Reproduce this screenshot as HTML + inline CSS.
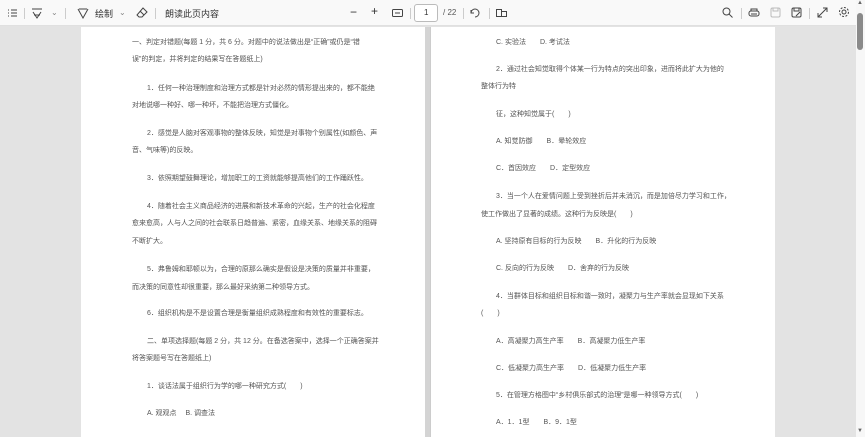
<!DOCTYPE html>
<html><head><meta charset="utf-8"><style>
*{margin:0;padding:0;box-sizing:border-box}
body{width:865px;height:437px;overflow:hidden;background:#e3e3e3;font-family:"Liberation Sans","Noto Sans CJK SC",sans-serif;position:relative}
.tb{position:absolute;left:0;top:0;width:856px;height:26px;background:#f9f9f9;border-bottom:1px solid #e0e0e0;font-size:9px;color:#333}
.tb span,.tb svg{position:absolute}
.sep{position:absolute;top:8px;width:1px;height:11px;background:#ccc}
.page{position:absolute;top:27px;height:410px;background:#fff}
.l{position:absolute;font-size:7px;color:#555;white-space:nowrap;line-height:9px}
.sb{position:absolute;left:856px;top:0;width:9px;height:437px;background:#f7f7f7}
</style></head><body>
<div class="tb">
<svg style="left:7px;top:8px" width="11" height="10" viewBox="0 0 11 10" stroke="#444" fill="none" stroke-width="1"><path d="M1 2h1M4 2h6M1 5h1M4 5h6M1 8h1M4 8h6"/></svg>
<div class="sep" style="left:24px"></div>
<svg style="left:31px;top:7px" width="12" height="12" viewBox="0 0 12 12" stroke="#444" fill="none"><path d="M1 2h10M2 5l4 6 4-6M3 8h6"/></svg>
<span style="left:51px;top:8px;color:#888;font-size:8px">⌄</span>
<div class="sep" style="left:65px"></div>
<svg style="left:77px;top:7px" width="12" height="12" viewBox="0 0 12 12" stroke="#444" fill="none"><path d="M1 2l5 9 5-9M2 2h8"/></svg>
<span style="left:95px;top:7px">绘制</span>
<span style="left:119px;top:8px;color:#888;font-size:8px">⌄</span>
<svg style="left:136px;top:7px" width="12" height="12" viewBox="0 0 12 12" stroke="#444" fill="none"><path d="M7 1l4 4-5 5H3L1 8z M4 4l4 4"/></svg>
<div class="sep" style="left:155px"></div>
<span style="left:165px;top:7px">朗读此页内容</span>
<span style="left:350px;top:5px;font-size:12px">−</span>
<span style="left:371px;top:4px;font-size:12px">+</span>
<svg style="left:392px;top:8px" width="11" height="10" viewBox="0 0 11 10" stroke="#444" fill="none"><rect x="0.5" y="1.5" width="10" height="7" rx="1"/><path d="M3 5h5"/></svg>
<div class="sep" style="left:410px"></div>
<div style="position:absolute;left:414px;top:4px;width:24px;height:18px;border:1px solid #bbb;border-radius:3px;background:#fff"></div>
<span style="left:424px;top:8px;font-size:8px">1</span>
<span style="left:443px;top:8px;font-size:8px;color:#555">/ 22</span>
<div class="sep" style="left:463px"></div>
<svg style="left:469px;top:7px" width="12" height="12" viewBox="0 0 12 12" stroke="#444" fill="none"><path d="M2 6a4 4 0 1 1 4 4M2 3v3h3"/></svg>
<div class="sep" style="left:489px"></div>
<svg style="left:496px;top:8px" width="11" height="10" viewBox="0 0 11 10" stroke="#444" fill="none"><rect x="0.5" y="1.5" width="5" height="7"/><rect x="5.5" y="3.5" width="5" height="5"/></svg>
<svg style="left:722px;top:7px" width="11" height="11" viewBox="0 0 11 11" stroke="#444" fill="none"><circle cx="4.5" cy="4.5" r="3.5"/><path d="M7 7l3.5 3.5"/></svg>
<div class="sep" style="left:741px"></div>
<svg style="left:748px;top:8px" width="12" height="10" viewBox="0 0 12 10" stroke="#444" fill="none"><rect x="1" y="3" width="10" height="5" rx="2"/><path d="M3 3V1h6v2M3 6h6"/></svg>
<svg style="left:770px;top:7px" width="11" height="11" viewBox="0 0 11 11" stroke="#bbb" fill="none"><rect x="1" y="1" width="9" height="9" rx="1.5"/><path d="M3 1v3h5V1"/></svg>
<svg style="left:791px;top:7px" width="11" height="11" viewBox="0 0 11 11" stroke="#444" fill="none"><rect x="1" y="1" width="9" height="9" rx="1.5"/><path d="M3 1v3h5V1M5 9l4-4"/></svg>
<div class="sep" style="left:809px"></div>
<svg style="left:817px;top:7px" width="11" height="11" viewBox="0 0 11 11" stroke="#444" fill="none"><path d="M1 10l9-9M6 1h4v4M1 6v4h4"/></svg>
<svg style="left:838px;top:6px" width="12" height="12" viewBox="0 0 12 12" stroke="#444" fill="none"><circle cx="6" cy="6" r="2"/><circle cx="6" cy="6" r="4.5" stroke-dasharray="2 1.5"/></svg>
</div>
<div class="page" style="left:81px;width:344px"></div>
<div style="position:absolute;left:425px;top:27px;width:5px;height:410px;background:#d4d4d4"></div>
<div class="page" style="left:430px;width:345px;border-left:1px solid #ccc"></div>
<div class="sb"><div style="position:absolute;left:1px;top:13px;width:6px;height:37px;background:#8a8a8a;border-radius:3px"></div><span style="position:absolute;left:1px;top:0;font-size:6px;color:#666">▲</span><span style="position:absolute;left:1px;top:428px;font-size:6px;color:#666">▼</span></div>

<div class="l" style="left:132px;top:38px">一、判定对错题(每题 1 分，共 6 分。对题中的说法做出是“正确”或仍是“错</div>
<div class="l" style="left:132px;top:55px">误”的判定，并将判定的结果写在答题纸上)</div>
<div class="l" style="left:147px;top:84px">1．任何一种治理制度和治理方式都是针对必然的情形提出来的，都不能绝</div>
<div class="l" style="left:132px;top:101px">对地说哪一种好、哪一种坏，不能把治理方式僵化。</div>
<div class="l" style="left:147px;top:129px">2．感觉是人脑对客观事物的整体反映，知觉是对事物个别属性(如颜色、声</div>
<div class="l" style="left:132px;top:146px">音、气味等)的反映。</div>
<div class="l" style="left:147px;top:174px">3．依照期望鼓舞理论，增加职工的工资就能够提高他们的工作踊跃性。</div>
<div class="l" style="left:147px;top:202px">4．随着社会主义商品经济的进展和新技术革命的兴起，生产的社会化程度</div>
<div class="l" style="left:132px;top:219px">愈来愈高，人与人之间的社会联系日趋普遍、紧密，血缘关系、地缘关系的阻碍</div>
<div class="l" style="left:132px;top:237px">不断扩大。</div>
<div class="l" style="left:147px;top:265px">5．弗鲁姆和耶顿以为，合理的原那么确实是假设是决策的质量并非重要，</div>
<div class="l" style="left:132px;top:283px">而决策的同意性却很重要，那么最好采纳第二种领导方式。</div>
<div class="l" style="left:147px;top:309px">6．组织机构是不是设置合理是衡量组织成熟程度和有效性的重要标志。</div>
<div class="l" style="left:147px;top:337px">二、单项选择题(每题 2 分，共 12 分。在备选答案中，选择一个正确答案并</div>
<div class="l" style="left:132px;top:354px">将答案题号写在答题纸上)</div>
<div class="l" style="left:147px;top:382px">1．谈话法属于组织行为学的哪一种研究方式(　　)</div>
<div class="l" style="left:147px;top:409px">A. 观观点　 B. 调查法</div>

<div class="l" style="left:496px;top:38px">C. 实验法　　D. 考试法</div>
<div class="l" style="left:496px;top:65px">2．通过社会知觉取得个体某一行为特点的突出印象，进而将此扩大为他的</div>
<div class="l" style="left:481px;top:82px">整体行为特</div>
<div class="l" style="left:496px;top:110px">征，这种知觉属于(　　)</div>
<div class="l" style="left:496px;top:137px">A. 知觉防御　　B．晕轮效应</div>
<div class="l" style="left:496px;top:164px">C．首因效应　　D．定型效应</div>
<div class="l" style="left:496px;top:192px">3．当一个人在爱情问题上受到挫折后并未消沉，而是加倍尽力学习和工作，</div>
<div class="l" style="left:481px;top:210px">使工作做出了显著的成绩。这种行为反映是(　　)</div>
<div class="l" style="left:496px;top:237px">A. 坚持原有目标的行为反映　　B．升化的行为反映</div>
<div class="l" style="left:496px;top:264px">C. 反向的行为反映　　D．舍弃的行为反映</div>
<div class="l" style="left:496px;top:292px">4．当群体目标和组织目标和谐一致时，凝聚力与生产率就会显现如下关系</div>
<div class="l" style="left:481px;top:309px">(　　)</div>
<div class="l" style="left:496px;top:337px">A．高凝聚力高生产率　　B．高凝聚力低生产率</div>
<div class="l" style="left:496px;top:364px">C．低凝聚力高生产率　　D．低凝聚力低生产率</div>
<div class="l" style="left:496px;top:391px">5．在管理方格图中“乡村俱乐部式的治理”是哪一种领导方式(　　)</div>
<div class="l" style="left:496px;top:418px">A．1．1型　　B．9．1型</div>
</body></html>
